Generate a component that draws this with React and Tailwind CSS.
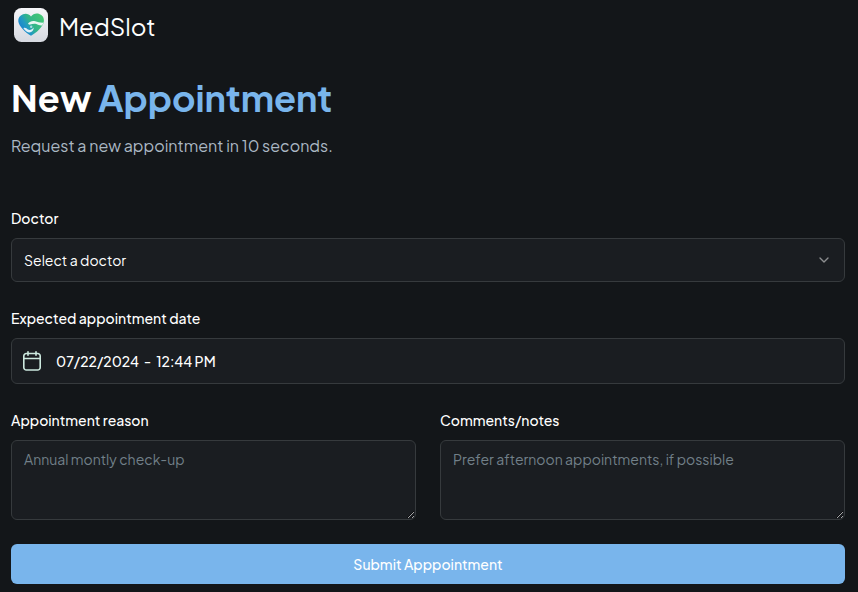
import { ChevronDown } from "lucide-react";

function Logo() {
  return (
    <svg viewBox="0 0 34 34" className="h-[34px] w-[34px] shrink-0">
      <defs>
        <linearGradient id="tile" x1="0" y1="0" x2="0" y2="1">
          <stop offset="0" stopColor="#f6f6f9" />
          <stop offset="1" stopColor="#d6d9e0" />
        </linearGradient>
        <linearGradient id="heart" x1="0" y1="0.75" x2="1" y2="0.2">
          <stop offset="0" stopColor="#1678d2" />
          <stop offset="0.32" stopColor="#2199c4" />
          <stop offset="0.52" stopColor="#31b48b" />
          <stop offset="1" stopColor="#46c873" />
        </linearGradient>
      </defs>
      <rect width="34" height="34" rx="7.5" fill="url(#tile)" />
      <path
        d="M17 8.6C15 5.6 11.8 5.2 9 6.2C5.7 7.4 4 10.3 4.3 13.2C4.8 18.5 11.7 24.6 17 27.7C22.2 24.8 29.2 19 29.9 13.2C30.3 9.7 28.1 6.8 25.3 6C22 5 18.9 6 17 8.6Z"
        fill="url(#heart)"
      />
      <path
        d="M14 15.6C15.8 13.3 18.4 12.4 21.2 13.2C24 14 26.6 14.9 29.6 14.6L28.2 17.4C26 17.6 24 17 22.3 16.1C20.3 15.1 18.2 16.1 16.2 16.6C15.2 16.9 14.3 16.5 14 15.6Z"
        fill="#eaf6f3"
      />
      <path
        d="M9.4 20.2C11.2 19.2 12.6 20.6 14 21.6C15.8 22.7 18.2 21.8 19.6 19.6C19.8 22.4 17.8 24.6 15 24.4C12.6 24.2 11 22.2 9.4 20.2Z"
        fill="#dff0f8"
      />
      <circle cx="17.2" cy="18.7" r="1.2" fill="#a9dbe4" />
    </svg>
  );
}

function CalendarIcon() {
  return (
    <svg
      viewBox="0 0 24 24"
      className="h-6 w-6 shrink-0"
      fill="none"
      stroke="#cde9df"
      strokeWidth="1.6"
      strokeLinecap="round"
      strokeLinejoin="round"
    >
      <path d="M8 2.8v3.4M16 2.8v3.4M3.8 9.5h16.4" />
      <path d="M6.3 4.5h11.4a2.5 2.5 0 0 1 2.5 2.5v11.5a2.5 2.5 0 0 1-2.5 2.5h-11.4a2.5 2.5 0 0 1-2.5-2.5v-11.5a2.5 2.5 0 0 1 2.5-2.5Z" />
    </svg>
  );
}

function Label({ children }) {
  return (
    <label className="block h-5 whitespace-nowrap text-sm leading-5 font-medium text-white">
      {children}
    </label>
  );
}

function Area({ placeholder }) {
  return (
    <textarea
      placeholder={placeholder}
      className="mt-2.5 block h-20 w-full resize rounded-md border border-[#363a3d] bg-[#1a1d21] px-3 py-2 text-sm text-white placeholder:text-[#728089] focus:outline-none"
    />
  );
}

export default function App() {
  return (
    <main className="h-[592px] w-[858px] overflow-hidden bg-[#131619] pr-[13px] pl-[11px] font-['Plus_Jakarta_Sans',Inter,sans-serif] text-white">
      <header className="flex h-[52px] items-start gap-[11px] pt-2 pl-[3px]">
        <Logo />
        <span className="text-2xl leading-9 font-normal">MedSlot</span>
      </header>
      <section className="pt-[25px]">
        <h1 className="h-[45px] whitespace-nowrap text-4xl leading-[41px] font-bold">
          New <span className="text-[#79b5ec]">Appointment</span>
        </h1>
        <p className="mt-3 h-6 whitespace-nowrap text-base leading-6 text-[#abb8c4]">
          Request a new appointment in 10 seconds.
        </p>
      </section>
      <form className="mt-[50px]">
        <Label>Doctor</Label>
        <div className="mt-2.5 flex h-11 items-center justify-between rounded-md border border-[#363a3d] bg-[#1a1d21] px-3 text-sm">
          <span>Select a doctor</span>
          <ChevronDown className="h-4 w-4 text-[#8d8e90]" />
        </div>
        <div className="mt-[26px]">
          <Label>Expected appointment date</Label>
        </div>
        <div className="mt-2.5 flex h-[46px] items-center rounded-md border border-[#363a3d] bg-[#1a1d21] pl-2 text-sm font-medium">
          <CalendarIcon />
          <span className="ml-3 whitespace-pre">07/22/2024  -  12:44 PM</span>
        </div>
        <div className="mt-[26px] grid grid-cols-2 gap-6">
          <div>
            <Label>Appointment reason</Label>
            <Area placeholder="Annual montly check-up" />
          </div>
          <div>
            <Label>Comments/notes</Label>
            <Area placeholder="Prefer afternoon appointments, if possible" />
          </div>
        </div>
        <button
          type="button"
          className="mt-6 flex h-10 w-full items-center justify-center rounded-md bg-[#79b5ec] text-sm font-medium text-white"
        >
          <span>Submit Apppointment</span>
        </button>
      </form>
    </main>
  );
}
